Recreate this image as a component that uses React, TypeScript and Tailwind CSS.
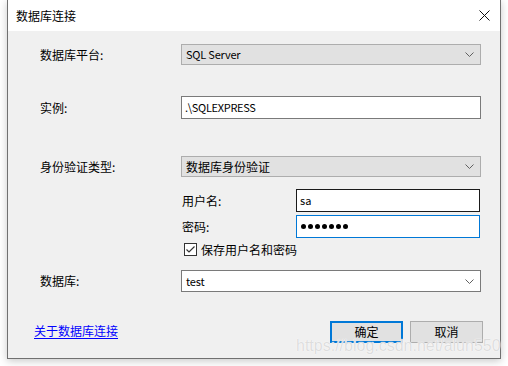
import React from "react";

const font = { fontFamily: '"Noto Sans CJK SC", "Noto Sans", sans-serif' };

function Chevron() {
  return (
    <svg width="9" height="5" viewBox="0 0 9 5" className="shrink-0">
      <polyline points="0.5,0.5 4.5,4.5 8.5,0.5" fill="none" stroke="#606060" strokeWidth="1" />
    </svg>
  );
}

function Combo({ text, white, latin }: { text: string; white?: boolean; latin?: boolean }) {
  return (
    <div
      className={
        "w-[300px] flex items-center justify-between pl-[4px] pr-[6px] leading-none text-black border " +
        (latin ? "text-[11px] tracking-[-0.2px] " : "text-[12px] ") +
        (white ? "h-[22px] bg-white border-[#7a7a7a]" : "h-[21px] bg-[#e1e1e1] border-[#adadad]")
      }
    >
      <span>{text}</span>
      <Chevron />
    </div>
  );
}

function Label({ children, w = "w-[141px]" }: { children: React.ReactNode; w?: string }) {
  return <div className={w + " shrink-0 text-[12px] leading-none text-black"}>{children}</div>;
}

export default function App() {
  return (
    <div className="w-[508px] h-[366px] bg-white relative overflow-hidden" style={font}>
      <div className="ml-[7px] w-[494px] h-[359px] border-x border-b border-[#707070] flex flex-col shadow-[0_2px_8px_rgba(0,0,0,0.22)]">
        {/* title bar */}
        <div className="h-[31px] bg-white flex items-center justify-between pl-[8px] pr-[10px] shrink-0">
          <span className="text-[12px] leading-none text-black">数据库连接</span>
          <svg width="11" height="11" viewBox="0 0 11 11">
            <path d="M0.5 0.5 L10.5 10.5 M10.5 0.5 L0.5 10.5" stroke="#111" strokeWidth="1" fill="none" />
          </svg>
        </div>
        {/* content */}
        <div className="flex-1 bg-[#f0f0f0] flex flex-col pt-[13px]">
          <div className="flex items-center pl-[32px] h-[21px]">
            <Label>数据库平台:</Label>
            <Combo text="SQL Server" latin />
          </div>
          <div className="flex items-center pl-[32px] mt-[31px] h-[23px]">
            <Label>实例:</Label>
            <div className="w-[300px] h-[23px] bg-white border border-[#7a7a7a] flex items-center pl-[3px] text-[11px] tracking-[-0.3px] leading-none text-black">
              .\SQLEXPRESS
            </div>
          </div>
          <div className="flex items-center pl-[32px] mt-[37px] h-[21px]">
            <Label>身份验证类型:</Label>
            <Combo text="数据库身份验证" />
          </div>
          <div className="flex items-center pl-[174px] mt-[12px] h-[23px]">
            <Label w="w-[114px]">用户名:</Label>
            <div className="w-[184px] h-[23px] bg-white border border-[#1a1a1a] flex items-center pl-[3px] text-[11px] leading-none text-black">
              sa
            </div>
          </div>
          <div className="flex items-center pl-[174px] mt-[3px] h-[23px]">
            <Label w="w-[114px]">密码:</Label>
            <div className="w-[184px] h-[23px] bg-white border border-[#0078d7] flex items-center pl-[4px] gap-[2px]">
              {[0, 1, 2, 3, 4, 5, 6].map((i) => (
                <span key={i} className="w-[5px] h-[5px] rounded-full bg-black" />
              ))}
            </div>
          </div>
          <div className="flex items-center pl-[176px] mt-[3px] h-[17px] gap-[4px]">
            <svg width="13" height="13" viewBox="0 0 13 13" className="shrink-0">
              <rect x="0.5" y="0.5" width="12" height="12" fill="#fff" stroke="#333" strokeWidth="1" />
              <polyline points="2.5,6.5 5,9 10.5,3.5" fill="none" stroke="#333" strokeWidth="1.2" />
            </svg>
            <span className="text-[12px] leading-none text-black">保存用户名和密码</span>
          </div>
          <div className="flex items-center pl-[32px] mt-[12px] h-[22px]">
            <Label>数据库:</Label>
            <Combo text="test" white latin />
          </div>
          <div className="flex items-start pl-[26px] pr-[17px] mt-[29px]">
            <a className="mt-[2px] text-[12px] leading-[16px] text-[#0000ff] underline underline-offset-2">关于数据库连接</a>
            <div className="ml-auto flex gap-[7px]">
              <div className="w-[73px] h-[22px] bg-[#e1e1e1] border-2 border-[#0078d7] flex items-center justify-center text-[12px] leading-none text-black">
                确定
              </div>
              <div className="w-[73px] h-[22px] bg-[#e1e1e1] border border-[#adadad] flex items-center justify-center text-[12px] leading-none text-black">
                取消
              </div>
            </div>
          </div>
        </div>
      </div>
      {/* watermark overlay */}
      <div
        className="absolute left-[296px] top-[338px] text-[16px] leading-[16px] text-[rgba(210,210,210,0.75)] whitespace-nowrap"
        style={{ fontFamily: '"Liberation Sans", Arial, sans-serif', textShadow: "0 0 1px #fff, 0 0 1px #fff" }}
      >
        https://blog.csdn.net/alun550
      </div>
    </div>
  );
}
